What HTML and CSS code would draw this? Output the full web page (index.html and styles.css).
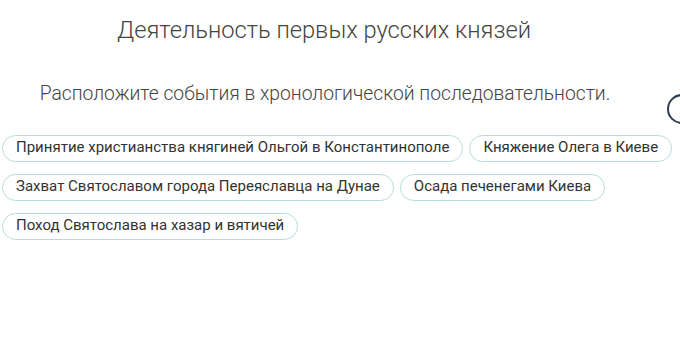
FILE: index.html
```html
<!DOCTYPE html>
<html>
    <head>
        <link rel="stylesheet" href="styles.css">
    </head>
    <body>
        <div id="task">
            <h1 class="title">Деятельность первых русских князей</h1>
            <p class="hint">Расположите события в хронологической последовательности.</p>
            <div class="chips">
                <span class="chip">Принятие христианства княгиней Ольгой в Константинополе</span>
                <span class="chip">Княжение Олега в Киеве</span>
                <span class="chip">Захват Святославом города Переяславца на Дунае</span>
                <span class="chip">Осада печенегами Киева</span>
                <span class="chip">Поход Святослава на хазар и вятичей</span>
            </div>
        </div>
        <div class="help"></div>
    </body>
</html>
```

FILE: styles.css
```css
body{
    margin:0px;
    padding:0px;
    background:white;
    font-family:Roboto, "Liberation Sans", sans-serif;
    overflow:hidden;
    position:relative;
    height:345px;
}

#task{
    width:678px;
    padding-left:2px;
}

.title{
    width:644px;
    margin:0px;
    padding-top:15px;
    text-align:center;
    font-size:23.7px;
    line-height:30px;
    font-weight:300;
    color:#444;
}

.hint{
    width:646px;
    margin:37px 0px 0px 0px;
    text-align:center;
    font-size:19.3px;
    line-height:24px;
    font-weight:300;
    color:#444;
}

.chips{
    display:flex;
    flex-wrap:wrap;
    gap:12px 6px;
    margin-top:29px;
}

.chip{
    display:inline-block;
    line-height:23px;
    padding:0px 13px 2px 13px;
    height:23px;
    border:1px solid #b5dcdc;
    border-radius:14px;
    font-size:15px;
    color:#333;
}

.help{
    position:absolute;
    left:667px;
    top:94px;
    width:26px;
    height:26px;
    border:2px solid #2c3e50;
    border-radius:50%;
}
```
